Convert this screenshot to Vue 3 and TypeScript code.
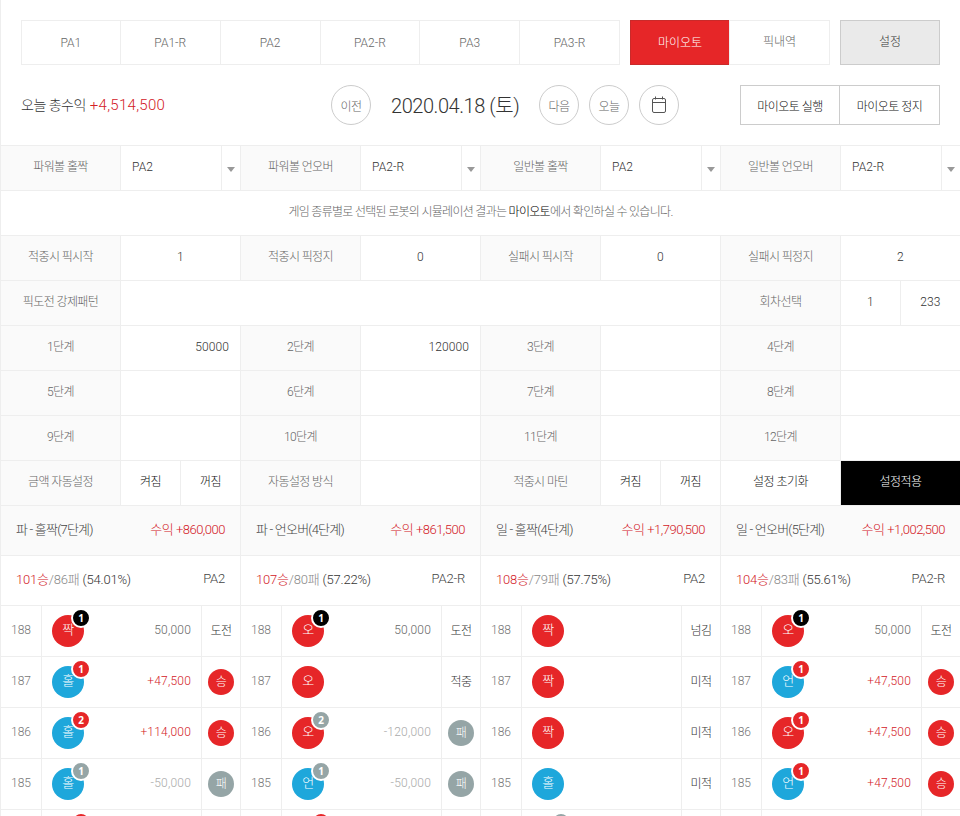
<script setup lang="ts">
type Cell = {
  kind: "label" | "val" | "right" | "select" | "half" | "on" | "black" | "plain";
  text?: string;
  span?: number;
};
type Pick = {
  ball: string;
  color: "red" | "blue";
  badge?: string;
  badgeColor?: "black" | "red" | "gray";
  money?: string;
  moneyColor?: "up" | "down";
  result: string;
  chip?: "red" | "gray";
};

const tabs = ["PA1", "PA1-R", "PA2", "PA2-R", "PA3", "PA3-R"];

const label = (text: string): Cell => ({ kind: "label", text, span: 2 });
const val = (text = ""): Cell => ({ kind: "val", text, span: 2 });
const amount = (text = ""): Cell => ({ kind: "right", text, span: 2 });
const select = (text: string): Cell => ({ kind: "select", text, span: 2 });
const half = (text: string): Cell => ({ kind: "half", text, span: 1 });

const rowsA: Cell[][] = [
  [label("파워볼 홀짝"), select("PA2"), label("파워볼 언오버"), select("PA2-R"), label("일반볼 홀짝"), select("PA2"), label("일반볼 언오버"), select("PA2-R")],
];
const rowsB: Cell[][] = [
  [label("적중시 픽시작"), val("1"), label("적중시 픽정지"), val("0"), label("실패시 픽시작"), val("0"), label("실패시 픽정지"), val("2")],
  [label("픽도전 강제패턴"), { kind: "val", span: 10 }, label("회차선택"), half("1"), half("233")],
  [label("1단계"), amount("50000"), label("2단계"), amount("120000"), label("3단계"), amount(), label("4단계"), amount()],
  [label("5단계"), amount(), label("6단계"), amount(), label("7단계"), amount(), label("8단계"), amount()],
  [label("9단계"), amount(), label("10단계"), amount(), label("11단계"), amount(), label("12단계"), amount()],
  [
    label("금액 자동설정"), { kind: "on", text: "켜짐", span: 1 }, { kind: "on", text: "꺼짐", span: 1 },
    label("자동설정 방식"), val(),
    label("적중시 마틴"), { kind: "on", text: "켜짐", span: 1 }, { kind: "on", text: "꺼짐", span: 1 },
    { kind: "plain", text: "설정 초기화", span: 2 }, { kind: "black", text: "설정적용", span: 2 },
  ],
];

const summaries = [
  { name: "파 - 홀짝(7단계)", profit: "수익 +860,000", win: "101승", lose: "/86패", rate: "(54.01%)", bot: "PA2" },
  { name: "파 - 언오버(4단계)", profit: "수익 +861,500", win: "107승", lose: "/80패", rate: "(57.22%)", bot: "PA2-R" },
  { name: "일 - 홀짝(4단계)", profit: "수익 +1,790,500", win: "108승", lose: "/79패", rate: "(57.75%)", bot: "PA2" },
  { name: "일 - 언오버(5단계)", profit: "수익 +1,002,500", win: "104승", lose: "/83패", rate: "(55.61%)", bot: "PA2-R" },
];

const rounds = [188, 187, 186, 185];

const picks: Pick[][] = [
  [
    { ball: "짝", color: "red", badge: "1", badgeColor: "black", money: "50,000", result: "도전" },
    { ball: "오", color: "red", badge: "1", badgeColor: "black", money: "50,000", result: "도전" },
    { ball: "짝", color: "red", result: "넘김" },
    { ball: "오", color: "red", badge: "1", badgeColor: "black", money: "50,000", result: "도전" },
  ],
  [
    { ball: "홀", color: "blue", badge: "1", badgeColor: "red", money: "+47,500", moneyColor: "up", result: "승", chip: "red" },
    { ball: "오", color: "red", result: "적중" },
    { ball: "짝", color: "red", result: "미적" },
    { ball: "언", color: "blue", badge: "1", badgeColor: "red", money: "+47,500", moneyColor: "up", result: "승", chip: "red" },
  ],
  [
    { ball: "홀", color: "blue", badge: "2", badgeColor: "red", money: "+114,000", moneyColor: "up", result: "승", chip: "red" },
    { ball: "오", color: "red", badge: "2", badgeColor: "gray", money: "-120,000", moneyColor: "down", result: "패", chip: "gray" },
    { ball: "짝", color: "red", result: "미적" },
    { ball: "오", color: "red", badge: "1", badgeColor: "red", money: "+47,500", moneyColor: "up", result: "승", chip: "red" },
  ],
  [
    { ball: "홀", color: "blue", badge: "1", badgeColor: "gray", money: "-50,000", moneyColor: "down", result: "패", chip: "gray" },
    { ball: "언", color: "blue", badge: "1", badgeColor: "gray", money: "-50,000", moneyColor: "down", result: "패", chip: "gray" },
    { ball: "홀", color: "blue", result: "미적" },
    { ball: "언", color: "blue", badge: "1", badgeColor: "red", money: "+47,500", moneyColor: "up", result: "승", chip: "red" },
  ],
];

// the next round only peeks in at the bottom edge, so just its badges are drawn
const nextRound: (string | null)[] = ["red", "red", "gray", null];
</script>

<template>
  <div class="page">
    <header class="top">
      <div class="tab-row">
        <div class="tabs">
          <a v-for="tab in tabs" :key="tab" class="tab">{{ tab }}</a>
        </div>
        <div class="pair">
          <a class="tab active">마이오토</a>
          <a class="tab ko">픽내역</a>
        </div>
        <a class="tab setting ko">설정</a>
      </div>
      <div class="date-row">
        <div class="today">오늘 총수익 <span class="red">+4,514,500</span></div>
        <div class="nav">
          <a class="round">이전</a>
          <div class="date">2020.04.18 (토)</div>
          <a class="round">다음</a>
          <a class="round">오늘</a>
          <a class="round">
            <svg width="16" height="18" viewBox="0 0 16 18" fill="none" stroke="#555" stroke-width="1">
              <rect x="1.5" y="2.5" width="13" height="14" rx="1.5" />
              <path d="M1.5 6.5h13M4.5 .5v3M11.5 .5v3" />
            </svg>
          </a>
        </div>
        <div class="actions">
          <a class="action">마이오토 실행</a>
          <a class="action">마이오토 정지</a>
        </div>
      </div>
    </header>

    <section class="grid">
      <template v-for="(row, r) in rowsA" :key="r">
        <div
          v-for="(cell, c) in row"
          :key="c"
          class="cell"
          :class="cell.kind"
          :style="{ gridColumn: `span ${cell.span}` }"
        >
          <template v-if="cell.kind === 'select'">
            <span class="select-text">{{ cell.text }}</span>
            <span class="select-arrow"><i></i></span>
          </template>
          <template v-else>{{ cell.text }}</template>
        </div>
      </template>
      <div class="cell notice">
        <span>게임 종류별로 선택된 로봇의 시뮬레이션 결과는 <b>마이오토</b>에서 확인하실 수 있습니다.</span>
      </div>
      <template v-for="(row, r) in rowsB" :key="r">
        <div
          v-for="(cell, c) in row"
          :key="c"
          class="cell"
          :class="cell.kind"
          :style="{ gridColumn: `span ${cell.span}` }"
        >
          {{ cell.text }}
        </div>
      </template>
    </section>

    <section class="summary">
      <div v-for="s in summaries" :key="s.name" class="sum-head">
        <span class="sum-name">{{ s.name }}</span>
        <span class="red">{{ s.profit }}</span>
      </div>
      <div v-for="s in summaries" :key="s.win" class="sum-body">
        <span>
          <span class="red">{{ s.win }}</span><span class="gray">{{ s.lose }}</span>
          <span class="rate">{{ s.rate }}</span>
        </span>
        <span>{{ s.bot }}</span>
      </div>
    </section>

    <section class="games">
      <template v-for="(row, r) in picks" :key="r">
        <div v-for="(pick, c) in row" :key="c" class="game">
          <div class="no">{{ rounds[r] }}</div>
          <div class="main">
            <span class="ball" :class="pick.color">
              <span class="ball-text">{{ pick.ball }}</span>
              <i v-if="pick.badge" class="badge" :class="pick.badgeColor">{{ pick.badge }}</i>
            </span>
            <span v-if="pick.money" class="money" :class="pick.moneyColor">{{ pick.money }}</span>
          </div>
          <div class="result">
            <span v-if="pick.chip" class="chip" :class="pick.chip"><span class="chip-text">{{ pick.result }}</span></span>
            <template v-else>{{ pick.result }}</template>
          </div>
        </div>
      </template>
      <div v-for="(color, c) in nextRound" :key="c" class="game">
        <div class="no"></div>
        <div class="main">
          <span class="ball empty">
            <i v-if="color" class="badge" :class="color"></i>
          </span>
        </div>
        <div class="result"></div>
      </div>
    </section>
  </div>
</template>

<style>
html,
body {
  margin: 0;
  background: #fff;
  overflow: hidden;
}
</style>

<style scoped>
.page {
  width: 960px;
  height: 816px;
  overflow: hidden;
  font-family: Roboto, "Noto Sans CJK KR", sans-serif;
  font-size: 12px;
  font-weight: 300;
  color: #666;
  letter-spacing: -0.5px;
}

.red {
  color: #d32027;
}

.top {
  border-left: 1px solid #eee;
  padding: 20px;
}

.tab-row {
  display: flex;
}

.tabs {
  display: grid;
  grid-template-columns: repeat(6, 1fr);
  width: 599px;
  margin-right: 10px;
}

.pair {
  display: grid;
  grid-template-columns: 100px 100px;
  margin-right: 10px;
}

.tab {
  display: flex;
  align-items: center;
  justify-content: center;
  box-sizing: border-box;
  height: 45px;
  border: 1px solid #eee;
  margin-left: -1px;
  background: #fff;
  letter-spacing: 0;
}

.tab.ko {
  padding-bottom: 5px;
}

.tabs .tab:first-child {
  margin-left: 0;
}

.tab.active {
  margin-left: 0;
  padding-bottom: 3px;
  background: #e62628;
  border-color: #c92a2a;
  color: #fff;
}

.tab.setting {
  width: 100px;
  margin-left: 0;
  background: #eaeaea;
  border-color: #ccc;
  color: #333;
}

.date-row {
  display: flex;
  align-items: center;
  height: 40px;
  margin-top: 20px;
}

.today {
  width: 310px;
  padding-bottom: 2px;
  font-size: 14px;
  color: #333;
}

.today .red {
  margin-left: 1px;
  font-size: 15px;
  letter-spacing: 0.3px;
}

.nav {
  display: flex;
  align-items: center;
  gap: 10px;
}

.round {
  display: flex;
  align-items: center;
  justify-content: center;
  box-sizing: border-box;
  width: 40px;
  height: 40px;
  border: 1px solid #ccc;
  border-radius: 50%;
  color: #666;
}

.date {
  box-sizing: border-box;
  width: 148px;
  padding-left: 10px;
  padding-bottom: 2px;
  font-size: 20px;
  color: #333;
  letter-spacing: -0.45px;
  white-space: nowrap;
}

.actions {
  display: flex;
  margin-left: auto;
}

.action {
  display: flex;
  align-items: center;
  justify-content: center;
  box-sizing: border-box;
  width: 100px;
  height: 40px;
  border: 1px solid #ccc;
  color: #111;
}

.action + .action {
  margin-left: -1px;
  width: 101px;
}

.grid {
  display: grid;
  grid-template-columns: repeat(16, 60px);
  grid-auto-rows: 45px;
}

.cell {
  display: flex;
  align-items: center;
  justify-content: center;
  box-sizing: border-box;
  padding-bottom: 3px;
  border-top: 1px solid #eee;
  border-left: 1px solid #eee;
  color: #333;
  letter-spacing: 0.1px;
}

.cell.label {
  padding-bottom: 6px;
  background: #fafafa;
  color: #666;
  letter-spacing: -0.6px;
}

.cell.right {
  justify-content: flex-end;
  padding-right: 11px;
}

.cell.on,
.cell.plain {
  padding-bottom: 5px;
  color: #111;
  letter-spacing: -0.5px;
}

.cell.black {
  padding-bottom: 5px;
  background: #000;
  color: #fff;
  letter-spacing: -0.5px;
}

.cell.select {
  justify-content: space-between;
  padding-left: 11px;
  padding-bottom: 0;
}

.select-text {
  padding-bottom: 3px;
}

.select-arrow {
  display: flex;
  align-items: center;
  justify-content: center;
  width: 18px;
  height: 100%;
  border-left: 1px solid #eee;
}

.select-arrow i {
  width: 0;
  height: 0;
  margin-top: 3px;
  border-left: 4px solid transparent;
  border-right: 4px solid transparent;
  border-top: 5px solid #999;
}

.notice {
  grid-column: span 16;
  padding-bottom: 6px;
  color: #666;
  letter-spacing: -0.7px;
}

.notice b {
  color: #000;
  font-weight: 300;
}

.summary {
  display: grid;
  grid-template-columns: repeat(4, 240px);
  grid-template-rows: 50px 50px;
}

.sum-head,
.sum-body {
  display: flex;
  align-items: center;
  justify-content: space-between;
  box-sizing: border-box;
  padding: 0 15px 5px 15px;
  border-top: 1px solid #eee;
  border-left: 1px solid #eee;
  color: #444;
  font-size: 13px;
  letter-spacing: -0.2px;
}

.sum-head {
  background: #fafafa;
  letter-spacing: -0.5px;
}

.sum-name {
  letter-spacing: -0.8px;
}

.sum-body .gray {
  color: #888;
}

.rate {
  margin-left: 3px;
  color: #333;
}

.games {
  display: grid;
  grid-template-columns: repeat(4, 240px);
  grid-auto-rows: 51px;
}

.game {
  display: grid;
  grid-template-columns: 41px 160px 39px;
  box-sizing: border-box;
  border-top: 1px solid #eee;
}

.no,
.main,
.result {
  display: flex;
  align-items: center;
  box-sizing: border-box;
  border-left: 1px solid #eee;
}

.no {
  justify-content: center;
  padding-bottom: 3px;
  color: #777;
  letter-spacing: 0;
}

.main {
  justify-content: space-between;
  padding: 0 10px;
}

.result {
  justify-content: center;
  padding-bottom: 3px;
  color: #333;
}

.ball {
  position: relative;
  display: flex;
  align-items: center;
  justify-content: center;
  width: 32px;
  height: 32px;
  border-radius: 50%;
  color: #fff;
  font-size: 13px;
}

.ball.red,
.chip.red {
  background: #e62628;
}

.ball.blue {
  background: #1ea7db;
}

.ball.empty {
  background: none;
}

.ball-text {
  margin-top: -5px;
}

.chip-text {
  margin-top: -3px;
}

.badge {
  position: absolute;
  top: -7px;
  right: -7px;
  display: flex;
  align-items: center;
  justify-content: center;
  box-sizing: border-box;
  width: 20px;
  height: 20px;
  border: 2px solid #fff;
  border-radius: 50%;
  color: #fff;
  font-family: "Noto Sans", sans-serif;
  font-size: 10px;
  font-style: normal;
  font-weight: 700;
  letter-spacing: 0;
}

.badge.black {
  background: #000;
}

.badge.red {
  background: #e62628;
}

.badge.gray {
  background: #95a5a6;
}

.money {
  padding-bottom: 3px;
  color: #666;
  letter-spacing: 0.2px;
}

.money.up {
  color: #d32027;
}

.money.down {
  color: #aaa;
}

.chip {
  display: flex;
  align-items: center;
  justify-content: center;
  width: 26px;
  height: 26px;
  margin-top: 3px;
  border-radius: 50%;
  color: #fff;
  font-size: 12px;
}

.chip.gray {
  background: #95a5a6;
}
</style>
